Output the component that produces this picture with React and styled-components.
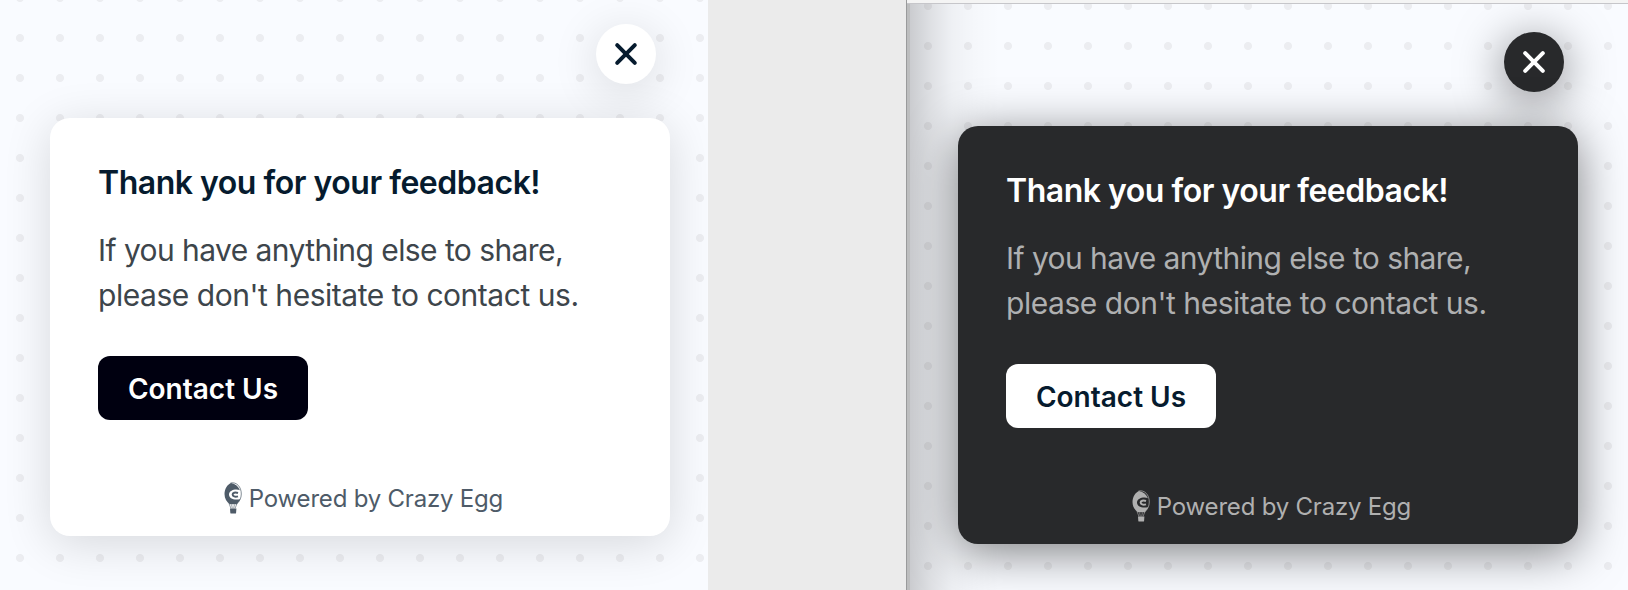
import React from "react";
import styled, { createGlobalStyle, ThemeProvider } from "styled-components";

const GlobalStyle = createGlobalStyle`
  *, *::before, *::after { box-sizing: border-box; }
  body {
    margin: 0;
    background: #ebebeb;
    font-family: Inter, "Liberation Sans", sans-serif;
    overflow: hidden;
  }
`;

const light = {
  surface: "#ffffff",
  heading: "#061b2e",
  body: "#3d454b",
  footer: "#4e5b68",
  buttonBg: "#000010",
  buttonText: "#ffffff",
  shadow: "0 8px 48px rgba(0, 0, 0, 0.14)",
};

const dark = {
  surface: "#28292b",
  heading: "#ffffff",
  body: "#afb0b1",
  footer: "#b0b0b0",
  buttonBg: "#ffffff",
  buttonText: "#061b2e",
  shadow: "0 8px 48px rgba(0, 0, 0, 0.5)",
};

const Page = styled.main`
  display: flex;
  justify-content: space-between;
  width: 1628px;
  height: 590px;
`;

const Canvas = styled.section`
  flex: 1;
  overflow: hidden;
  padding: ${(p) => p.$padding};
  background-color: #f9fbff;
  background-image: ${(p) => (p.$shaded
    ? "linear-gradient(to right, rgba(0,0,0,.19), rgba(0,0,0,.11) 20px, rgba(0,0,0,.045) 42px, rgba(0,0,0,.015) 65px, transparent 90px), "
    : "")}radial-gradient(circle at center, #ecedf1 3.6px, transparent 4.4px);
  background-size: ${(p) => (p.$shaded ? "100% 100%, 40px 40px" : "40px 40px")};
  background-position: ${(p) => p.$origin};
`;

const PlainPane = styled.div`
  display: flex;
  width: 708px;
`;

const WindowPane = styled.div`
  display: flex;
  flex-direction: column;
  width: 722px;
  border-left: 1px solid #999a9b;
`;

const TitleBarEdge = styled.div`
  height: 4px;
  background: #f4f4f4;
  border-bottom: 1px solid #c6c6ca;
`;

const WindowBody = styled.div`
  display: flex;
  flex: 1;
  border-left: 3px solid #bcbdbe;
`;

const Widget = styled.div`
  display: flex;
  flex-direction: column;
  gap: 34px;
  width: 620px;
`;

const CloseButton = styled.button`
  display: flex;
  align-items: center;
  justify-content: center;
  align-self: flex-end;
  width: 60px;
  height: 60px;
  margin-right: 14px;
  padding: 0;
  border: 0;
  border-radius: 50%;
  color: ${(p) => p.theme.heading};
  background: ${(p) => p.theme.surface};
  box-shadow: ${(p) => p.theme.shadow};
`;

const Card = styled.article`
  display: flex;
  flex-direction: column;
  align-items: flex-start;
  height: 418px;
  padding: 45px 48px 20px;
  border-radius: 20px;
  background: ${(p) => p.theme.surface};
  box-shadow: ${(p) => p.theme.shadow};
`;

const Title = styled.h1`
  margin: 0;
  font-size: 32px;
  font-weight: 600;
  line-height: 40px;
  letter-spacing: -0.48px;
  white-space: nowrap;
  color: ${(p) => p.theme.heading};
`;

const Message = styled.p`
  margin: 25px 0 0;
  font-size: 30px;
  line-height: 45px;
  white-space: nowrap;
  color: ${(p) => p.theme.body};
`;

const Line = styled.span`
  display: block;
  letter-spacing: ${(p) => p.$tracking};
`;

const ContactButton = styled.button`
  width: 210px;
  height: 64px;
  margin-top: 38px;
  padding: 2px 0 0;
  border: 0;
  border-radius: 12px;
  font: 600 28px/34px Inter, "Liberation Sans", sans-serif;
  letter-spacing: 0;
  color: ${(p) => p.theme.buttonText};
  background: ${(p) => p.theme.buttonBg};
`;

const Footer = styled.footer`
  display: flex;
  align-items: center;
  align-self: center;
  gap: 7px;
  margin-top: auto;
  padding-left: 7px;
  height: 34px;
  font-size: 24px;
  line-height: 34px;
  letter-spacing: -0.2px;
  white-space: nowrap;
  color: ${(p) => p.theme.footer};
`;

const BalloonSvg = styled.svg`
  display: block;
  flex: none;
  margin-bottom: 2px;
`;

const CloseIcon = () => (
  <svg width="24" height="24" viewBox="0 0 24 24" fill="none" stroke="currentColor" strokeWidth="4" strokeLinecap="round">
    <path d="M3.2 3.2 20.8 20.8M20.8 3.2 3.2 20.8" />
  </svg>
);

const Balloon = () => (
  <BalloonSvg width="18" height="32" viewBox="0 0 18 32" fill="none">
    <path
      d="M7 1C3.200 2.600.5 7 .5 12c0 4.500 2.300 8 5.200 10.300h6.800c1.800-1.500 3-3.300 3.700-5.300-1 .4-2.300.6-3.600.6-4.600 0-7.600-2-7.600-5s3.300-5 7.500-5c1.300 0 2.400.2 3.400.6C14.500 4.600 11.500 2 7 1Z"
      fill="currentColor"
    />
    <path d="M6.500 1C12.800-.4 17.300 5 17.300 12c0 4-1.900 8-5 10.300" stroke="currentColor" strokeWidth=".7" />
    <path d="M14 11c-3-1.100-5.400-.1-5.400 1.600s2.400 2.700 5.400 1.700" stroke="currentColor" strokeWidth="1.900" />
    <path d="m5 21.500 2 5M13 21.500l-2 5M7.600 22.500l.7 4M10.400 22.500l-.7 4" stroke="currentColor" strokeWidth=".6" />
    <path d="M6 26.500h6.400l-.3 4.200c0 .5-.4.900-.9.900H7.200c-.5 0-.9-.4-.9-.9Z" fill="currentColor" />
  </BalloonSvg>
);

const FeedbackWidget = ({ theme }) => (
  <ThemeProvider theme={theme}>
    <Widget>
      <CloseButton aria-label="Close"><CloseIcon /></CloseButton>
      <Card>
        <Title>Thank you for your feedback!</Title>
        <Message>
          <Line $tracking="-0.57px">If you have anything else to share,</Line>
          <Line $tracking="-0.46px">please don't hesitate to contact us.</Line>
        </Message>
        <ContactButton>Contact Us</ContactButton>
        <Footer>
          <Balloon />
          <span>Powered by Crazy Egg</span>
        </Footer>
      </Card>
    </Widget>
  </ThemeProvider>
);

export default function App() {
  return (
    <>
      <GlobalStyle />
      <Page>
        <PlainPane>
          <Canvas $padding="24px 0 0 50px" $origin="0 18px">
            <FeedbackWidget theme={light} />
          </Canvas>
        </PlainPane>
        <WindowPane>
          <TitleBarEdge />
          <WindowBody>
            <Canvas $shaded $padding="28px 0 0 48px" $origin="0 0, -2px -18px">
              <FeedbackWidget theme={dark} />
            </Canvas>
          </WindowBody>
        </WindowPane>
      </Page>
    </>
  );
}
